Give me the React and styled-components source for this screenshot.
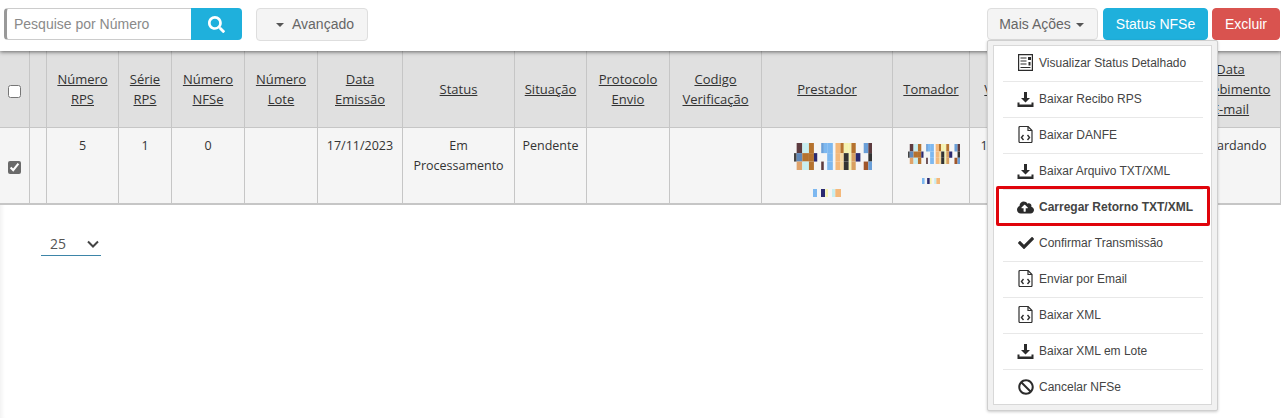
import React from 'react';
import styled, { createGlobalStyle } from 'styled-components';
import { FaSearch, FaCheck, FaBan, FaCloudUploadAlt } from 'react-icons/fa';

const GlobalStyle = createGlobalStyle`
  html, body {
    margin: 0;
    padding: 0;
    background: #fff;
    overflow: hidden;
  }
  * { box-sizing: border-box; }
`;

const Page = styled.div`
  position: relative;
  width: 1281px;
  height: 418px;
  overflow: hidden;
  font-family: 'Liberation Sans', Arial, sans-serif;
  box-shadow: inset 5px 0 4px -3px rgba(0, 0, 0, 0.06);
`;

const Toolbar = styled.div`
  position: relative;
  z-index: 2;
  height: 51px;
  padding: 8px 1px 0 4px;
  display: flex;
  align-items: flex-start;
  justify-content: space-between;
  background: #fff;
  box-shadow: 0 1px 4px rgba(0, 0, 0, 0.55);
`;

const ToolGroup = styled.div`
  display: flex;
  align-items: flex-start;
`;

const SearchInput = styled.div`
  width: 187px;
  height: 32px;
  padding-left: 7px;
  border: 1px solid #ccc;
  border-left: 3px solid #999;
  border-right: 0;
  border-radius: 4px 0 0 4px;
  font-size: 14px;
  line-height: 30px;
  color: #8a8a8a;
`;

const SearchButton = styled.button`
  width: 51px;
  height: 32px;
  padding: 0;
  display: flex;
  align-items: center;
  justify-content: center;
  border: 0;
  border-radius: 0 4px 4px 0;
  background: #1fb0dc;
  color: #fff;
  font-size: 17px;
`;

const Button = styled.button`
  height: ${p => p.$height || 32}px;
  margin-left: ${p => p.$gap || 0}px;
  width: ${p => p.$width}px;
  padding: ${p => p.$padding || 0};
  display: inline-flex;
  align-items: center;
  justify-content: center;
  border: 1px solid ${p => p.$border || '#dedede'};
  border-radius: 4px;
  background: ${p => p.$bg || '#f4f4f4'};
  color: ${p => p.$color || '#666'};
  font-family: inherit;
  font-size: 14px;
`;

const Caret = styled.span`
  width: 0;
  height: 0;
  border-left: 4px solid transparent;
  border-right: 4px solid transparent;
  border-top: 4px solid #555;
  margin: ${p => p.$margin};
`;

const Table = styled.div`
  display: grid;
  grid-template-columns: 30px 17px 72px 53px 73px 73px 85px 112px 72px 83px 92px 131px 77px 61px 150px 100px;
  grid-template-rows: 77px 77px;
  font-family: 'Open Sans', sans-serif;
  font-size: 12.500px;
  color: #333;
`;

const HeadCell = styled.div`
  display: flex;
  align-items: center;
  justify-content: center;
  padding-top: ${p => p.$pad || 0}px;
  font-size: 13px;
  text-align: center;
  line-height: 20px;
  text-decoration: underline;
  background: #e0e0e0;
  border-right: 1px solid #c6c6c6;
  border-bottom: 1px solid #c6c6c6;
`;

const Cell = styled.div`
  display: flex;
  flex-direction: column;
  align-items: center;
  justify-content: ${p => (p.$middle ? 'center' : 'flex-start')};
  padding-top: ${p => (p.$middle ? 4 : 8)}px;
  text-align: center;
  line-height: 20px;
  white-space: nowrap;
  background: #f5f5f5;
  border-right: 1px solid #c6c6c6;
  border-bottom: 2px solid #c6c6c6;
`;

const Check = styled.input`
  width: 13px;
  height: 13px;
  margin: 0 1px 0 0;
  accent-color: #6a6a6a;
`;

const Mosaic = styled.svg`
  display: block;
  width: ${p => p.$w}px;
  height: ${p => p.$h}px;
  margin-top: ${p => p.$top}px;
  margin-left: ${p => p.$left || 0}px;
`;

const Pager = styled.div`
  width: 60px;
  height: 24px;
  margin: 27px 0 0 41px;
  padding: 0 0 0 9px;
  display: flex;
  align-items: center;
  justify-content: space-between;
  border-bottom: 1px solid #3d85a8;
  font-family: 'Open Sans', sans-serif;
  font-size: 14px;
  color: #555;
`;

const Chevron = styled.svg`
  width: 12px;
  height: 8px;
  margin-right: 2px;
`;

const Menu = styled.div`
  position: absolute;
  z-index: 3;
  top: 40px;
  left: 987px;
  width: 231px;
  height: 371px;
  padding: 4px 5px 5px;
  background: #f1f1f1;
  border: 1px solid #cfcfcf;
  border-radius: 2px;
  box-shadow: 0 1px 3px rgba(0, 0, 0, 0.2);
`;

const MenuList = styled.div`
  height: 100%;
  padding: 0 8px 0 9px;
  background: #fff;
  border: 1px solid #d8d8d8;
  display: flex;
  flex-direction: column;
`;

const MenuItem = styled.div`
  position: relative;
  flex: 0 0 36px;
  display: flex;
  align-items: center;
  padding: 0 0 2px 11px;
  font-size: 12px;
  font-weight: ${p => (p.$highlight ? 700 : 400)};
  color: #444;
  border-bottom: ${p => (p.$highlight || p.$noline ? 0 : '1px solid #e8e8e8')};

  ${p =>
    p.$highlight &&
    `&::after {
      content: '';
      position: absolute;
      top: -4px;
      bottom: 0;
      left: -7px;
      right: -7px;
      border: 3px solid #e0040b;
      border-radius: 2px;
    }`}
`;

const MenuIcon = styled.span`
  flex: 0 0 23px;
  height: 20px;
  margin-right: 2px;
  display: flex;
  align-items: center;
  justify-content: center;
  font-size: ${p => p.$size || 16}px;
  color: #2b2b2b;
`;

const DownloadIcon = () => (
  <svg width="17" height="16" viewBox="0 0 17 16" fill="#2b2b2b">
    <path d="M7 1h3v6h3l-4.500 4.500L4 7h3z" />
    <path d="M0.500 11.500h2v2h12v-2h2V16H0.500z" />
  </svg>
);

const CodeFileIcon = () => (
  <svg width="15" height="17" viewBox="0 0 15 17" fill="none" stroke="#2f2f2f" strokeWidth="1.200">
    <path d="M1 1.500a1 1 0 0 1 1-1h8l4 4V15.500a1 1 0 0 1-1 1H2a1 1 0 0 1-1-1z" />
    <path d="M10 .5v4h4" />
    <path d="M5.500 9L3.500 11.500l2 2.500M9.500 9l2 2.500-2 2.500" strokeWidth="1.400" />
  </svg>
);

const StatusIcon = () => (
  <svg width="15" height="17" viewBox="0 0 15 17" fill="none" stroke="#2b2b2b" strokeWidth="1.200">
    <path d="M.6.600h13.800v15.800H.6z" />
    <path d="M2.500 4h6M2.500 7h6M2.500 10h6M2.500 13.500h10" />
    <path d="M10 3h3v3h-3zM10.500 8h2v3.500h-2z" fill="#2b2b2b" stroke="none" />
  </svg>
);

const columns = [
  [40, 8, '', '#444', ''],
  [48, 17, '#5d3b3f', '#5f88b8', '#e0a36a'],
  [65, 20, '#c8eef0', '#b5722e', '#c8eef0'],
  [85, 15, '#b5722e', '#b5722e', '#b5722e'],
  [100, 10, '', '#2a2a70', ''],
  [122, 8, '#6a9fd8', '', '#5d3b3f'],
  [130, 10, '#7db8f0', '', '#f0f6ff'],
  [140, 17, '#7db8f0', '#7db8f0', '#7db8f0'],
  [165, 15, '#f4b87a', '#f4b87a', '#f4b87a'],
  [180, 10, '#b5722e', '#f5d9a0', '#f5d9a0'],
  [190, 15, '#f5f2b0', '#333', '#333'],
  [205, 8, '#f5f2b0', '#f5f2b0', '#f5f2b0'],
  [213, 13, '#b5722e', '#d8a060', '#d8a060'],
  [226, 14, '', '#2a2a70', ''],
  [250, 14, '#6a9fd8', '', '#a0562a'],
  [264, 11, '#5d3b3f', '#333', '#6a9fd8']
];

const smallBars = [
  [0, 12, '#7db8f0'],
  [24, 12, '#2a2a70'],
  [37, 8, '#f5f2b0'],
  [57, 10, '#c8eef0'],
  [67, 17, '#f4b87a']
];

const BlurredName = ({ w, h, top, left }) => (
  <Mosaic $w={w} $h={h} $top={top} $left={left} viewBox="40 55 235 80" preserveAspectRatio="none">
    {columns.map(([x, width, a, b, c]) => (
      <g key={x}>
        {a && <rect x={x} y={55} width={width} height={30} fill={a} />}
        {b && <rect x={x} y={85} width={width} height={25} fill={b} />}
        {c && <rect x={x} y={110} width={width} height={25} fill={c} />}
      </g>
    ))}
  </Mosaic>
);

const BlurredLine = ({ w, h, top }) => (
  <Mosaic $w={w} $h={h} $top={top} viewBox="0 0 84 26" preserveAspectRatio="none">
    {smallBars.map(([x, width, fill]) => (
      <rect key={x} x={x} y={0} width={width} height={26} fill={fill} />
    ))}
  </Mosaic>
);

const headers = [
  ['Número', 'RPS'],
  ['Série', 'RPS'],
  ['Número', 'NFSe'],
  ['Número', 'Lote'],
  ['Data', 'Emissão'],
  ['Status'],
  ['Situação'],
  ['Protocolo', 'Envio'],
  ['Codigo', 'Verificação'],
  ['Prestador'],
  ['Tomador'],
  ['Valor'],
  [''],
  ['Data', 'Recebimento', 'E-mail']
];

const menuItems = [
  { label: 'Visualizar Status Detalhado', icon: <StatusIcon /> },
  { label: 'Baixar Recibo RPS', icon: <DownloadIcon /> },
  { label: 'Baixar DANFE', icon: <CodeFileIcon /> },
  { label: 'Baixar Arquivo TXT/XML', icon: <DownloadIcon /> },
  { label: 'Carregar Retorno TXT/XML', icon: <FaCloudUploadAlt />, size: 17, highlight: true },
  { label: 'Confirmar Transmissão', icon: <FaCheck /> },
  { label: 'Enviar por Email', icon: <CodeFileIcon /> },
  { label: 'Baixar XML', icon: <CodeFileIcon /> },
  { label: 'Baixar XML em Lote', icon: <DownloadIcon /> },
  { label: 'Cancelar NFSe', icon: <FaBan />, noline: true }
];

export default function App() {
  return (
    <Page>
      <GlobalStyle />
      <Toolbar>
        <ToolGroup>
          <SearchInput>Pesquise por Número</SearchInput>
          <SearchButton aria-label="Pesquisar">
            <FaSearch />
          </SearchButton>
          <Button $width={112} $gap={14} $height={33} $padding="0 0 1px 6px">
            <Caret $margin="1px 8px 0 0" />
            Avançado
          </Button>
        </ToolGroup>
        <ToolGroup>
          <Button $width={111} $padding="0 2px 0 0">
            Mais Ações
            <Caret $margin="1px 0 0 5px" />
          </Button>
          <Button $width={105} $gap={5} $bg="#1fb0dc" $border="#1fb0dc" $color="#fff">
            Status NFSe
          </Button>
          <Button $width={68} $gap={4} $bg="#d9534f" $border="#d9534f" $color="#fff">
            Excluir
          </Button>
        </ToolGroup>
      </Toolbar>

      <Table>
        <HeadCell $pad={4}>
          <Check type="checkbox" readOnly />
        </HeadCell>
        <HeadCell />
        {headers.map((lines, i) => (
          <HeadCell key={i}>
            <div>
              {lines.map(line => (
                <div key={line}>{line}</div>
              ))}
            </div>
          </HeadCell>
        ))}

        <Cell $middle>
          <Check type="checkbox" checked readOnly />
        </Cell>
        <Cell />
        <Cell>5</Cell>
        <Cell>1</Cell>
        <Cell>0</Cell>
        <Cell />
        <Cell>17/11/2023</Cell>
        <Cell>
          <div>Em</div>
          <div>Processamento</div>
        </Cell>
        <Cell>Pendente</Cell>
        <Cell />
        <Cell />
        <Cell>
          <BlurredName w={78} h={27} top={7} left={12} />
          <BlurredLine w={28} h={8} top={19} />
        </Cell>
        <Cell>
          <BlurredName w={52} h={20} top={8} left={6} />
          <BlurredLine w={18} h={6} top={14} />
        </Cell>
        <Cell>100,00</Cell>
        <Cell />
        <Cell>Aguardando</Cell>
      </Table>

      <Pager>
        25
        <Chevron viewBox="0 0 12 8" fill="none" stroke="#444" strokeWidth="2">
          <path d="M1 1.500l5 5 5-5" />
        </Chevron>
      </Pager>

      <Menu>
        <MenuList>
          {menuItems.map(item => (
            <MenuItem key={item.label} $highlight={item.highlight} $noline={item.noline}>
              <MenuIcon $size={item.size}>{item.icon}</MenuIcon>
              {item.label}
            </MenuItem>
          ))}
        </MenuList>
      </Menu>
    </Page>
  );
}
